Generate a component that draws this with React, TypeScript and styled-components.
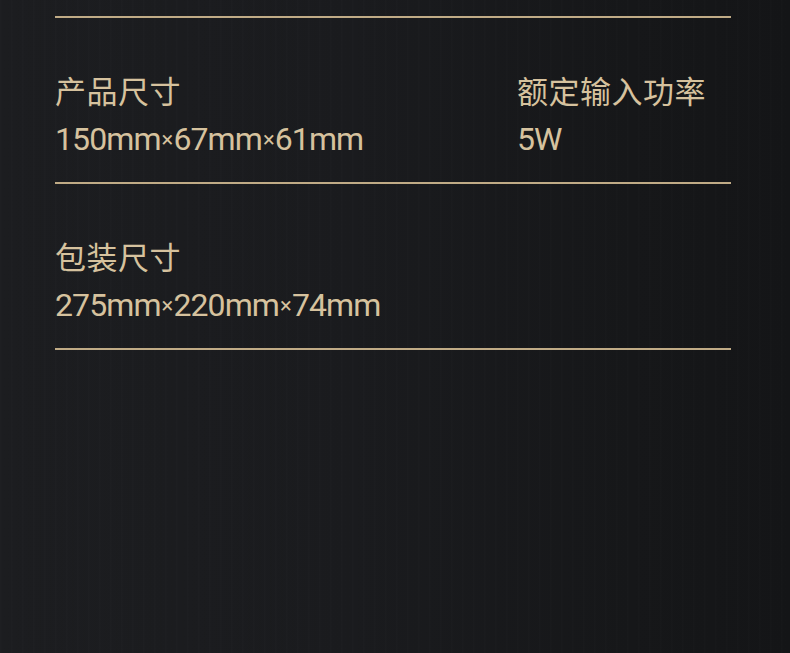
import React from "react";
import styled, { createGlobalStyle } from "styled-components";

const Global = createGlobalStyle`
  html, body {
    margin: 0;
    padding: 0;
    background: #18191c;
  }
`;

const Page = styled.div`
  width: 790px;
  height: 653px;
  overflow: hidden;
  box-sizing: border-box;
  padding: 16px 59px 0 55px;
  background:
    repeating-linear-gradient(
      90deg,
      rgba(255, 255, 255, 0.012) 0px,
      rgba(255, 255, 255, 0) 3px,
      rgba(0, 0, 0, 0.02) 7px,
      rgba(255, 255, 255, 0) 11px
    ),
    linear-gradient(90deg, #1c1d20 0%, #1a1b1e 45%, #161719 80%, #141517 100%);
  font-family: "Noto Sans CJK SC", "Noto Sans", sans-serif;
  color: #d6c29e;
`;

const Rule = styled.div`
  height: 2px;
  background: #c0ab86;
`;

const SpecRow = styled.div`
  display: grid;
  grid-template-columns: 462px 1fr;
  padding: 54px 0 25px;
`;

const Spec = styled.div`
  display: flex;
  flex-direction: column;
  gap: 13px;
`;

const Label = styled.div`
  font-size: 31px;
  line-height: 36px;
  letter-spacing: 0.5px;
`;

const Value = styled.div`
  font-family: Roboto, "Noto Sans CJK SC", sans-serif;
  font-size: 32px;
  line-height: 36px;
  height: 36px;
  letter-spacing: -0.9px;
`;

const Times = styled.span`
  font-size: 22px;
  line-height: 1;
  margin: 0 1px;
  position: relative;
  top: -3px;
`;

const rows = [
  [
    { label: "产品尺寸", value: ["150mm", "67mm", "61mm"] },
    { label: "额定输入功率", value: ["5W"] },
  ],
  [{ label: "包装尺寸", value: ["275mm", "220mm", "74mm"] }],
];

export default function App() {
  return (
    <>
      <Global />
      <Page>
        <Rule />
        {rows.map((row, i) => (
          <React.Fragment key={i}>
            <SpecRow>
              {row.map((s) => (
                <Spec key={s.label}>
                  <Label>{s.label}</Label>
                  <Value>
                    {s.value.map((part, j) => (
                      <React.Fragment key={j}>
                        {j > 0 && <Times>×</Times>}
                        {part}
                      </React.Fragment>
                    ))}
                  </Value>
                </Spec>
              ))}
            </SpecRow>
            <Rule />
          </React.Fragment>
        ))}
      </Page>
    </>
  );
}
